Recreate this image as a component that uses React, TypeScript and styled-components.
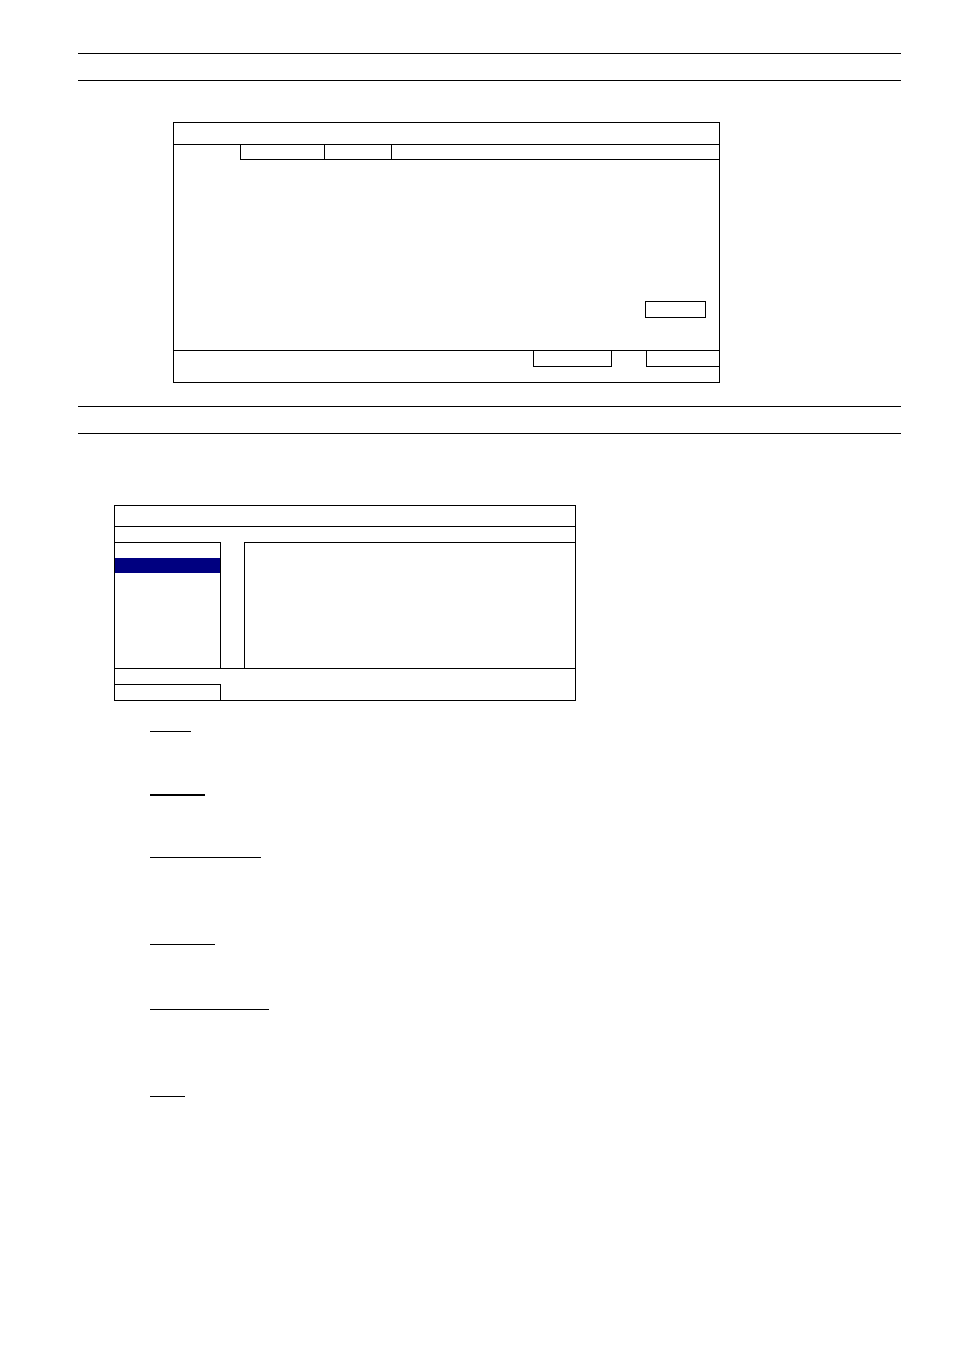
import React from "react";
import styled, { createGlobalStyle } from "styled-components";

const Global = createGlobalStyle`
  *, *::before, *::after { box-sizing: border-box; }
  html, body { margin: 0; padding: 0; background: #fff; }
  body { font-family: "Liberation Sans", Arial, sans-serif; }
`;

const Page = styled.div`
  width: 954px;
  min-height: 1350px;
  background: #fff;
  padding-top: 53px;
  display: flex;
  flex-direction: column;
`;

const DoubleRule = styled.div<{ $top?: number }>`
  margin-top: ${(p) => p.$top ?? 0}px;
  margin-left: 78px;
  width: 823px;
  height: 28px;
  border-top: 1px solid #000;
  border-bottom: 1px solid #000;
`;

/* ---------- Dialog 1 ---------- */
const Dialog = styled.div<{ $left: number; $top: number; $w: number; $h: number }>`
  margin-left: ${(p) => p.$left}px;
  margin-top: ${(p) => p.$top}px;
  width: ${(p) => p.$w}px;
  height: ${(p) => p.$h}px;
  border: 1px solid #000;
  display: flex;
  flex-direction: column;
`;

const TitleBar = styled.div<{ $h: number }>`
  height: ${(p) => p.$h}px;
  border-bottom: 1px solid #000;
  flex: none;
`;

const TabRow = styled.div`
  height: 15px;
  display: flex;
  flex: none;
`;

const TabSpacer = styled.div`
  width: 66px;
  flex: none;
`;

const Tab = styled.div<{ $w?: number }>`
  ${(p) => (p.$w ? `width: ${p.$w}px; flex: none;` : "flex: 1;")}
  border-left: 1px solid #000;
  border-bottom: 1px solid #000;
`;

const Content = styled.div`
  height: 190px;
  flex: none;
  display: flex;
  justify-content: flex-end;
  align-items: flex-start;
  padding-top: 141px;
  padding-right: 13px;
`;

const SmallButton = styled.div`
  width: 61px;
  height: 17px;
  border: 1px solid #000;
`;

const ButtonRow = styled.div`
  height: 17px;
  flex: none;
  border-top: 1px solid #000;
  display: flex;
  justify-content: flex-end;
`;

const RowButton = styled.div<{ $w: number; $right?: boolean; $gap?: number }>`
  width: ${(p) => p.$w}px;
  height: 16px;
  border-left: 1px solid #000;
  border-bottom: 1px solid #000;
  ${(p) => (p.$right ? "border-right: 1px solid #000;" : "")}
  margin-right: ${(p) => p.$gap ?? 0}px;
`;

/* ---------- Dialog 2 ---------- */
const Gap = styled.div<{ $h: number }>`
  height: ${(p) => p.$h}px;
  flex: none;
`;

const MiddleRow = styled.div`
  height: 127px;
  flex: none;
  display: flex;
  border-bottom: 1px solid #000;
`;

const ListBox = styled.div`
  width: 106px;
  flex: none;
  border-top: 1px solid #000;
  border-right: 1px solid #000;
  display: flex;
  flex-direction: column;
`;

const ListItem = styled.div<{ $active?: boolean }>`
  height: 15px;
  flex: none;
  background: ${(p) => (p.$active ? "#000080" : "transparent")};
`;

const Panel = styled.div`
  flex: 1;
  margin-left: 23px;
  border-top: 1px solid #000;
  border-left: 1px solid #000;
`;

const BottomArea = styled.div`
  flex: 1;
  display: flex;
  flex-direction: column;
  justify-content: flex-end;
`;

const BottomBox = styled.div`
  width: 106px;
  height: 16px;
  border-top: 1px solid #000;
  border-right: 1px solid #000;
`;

/* ---------- Underlines ---------- */
const Marks = styled.div`
  display: flex;
  flex-direction: column;
  padding-left: 150px;
`;

const Mark = styled.div<{ $w: number; $top: number; $thick?: number }>`
  width: ${(p) => p.$w}px;
  margin-top: ${(p) => p.$top}px;
  height: 0;
  border-top: ${(p) => p.$thick ?? 1}px solid #000;
`;

const marks = [
  { w: 41, y: 731 },
  { w: 55, y: 794, t: 2 },
  { w: 111, y: 857 },
  { w: 65, y: 944 },
  { w: 119, y: 1009 },
  { w: 35, y: 1096 },
];

export default function App() {
  let prevEnd = 701;
  return (
    <>
      <Global />
      <Page>
        <DoubleRule />
        <Dialog $left={173} $top={41} $w={547} $h={261}>
          <TitleBar $h={22} />
          <TabRow>
            <TabSpacer />
            <Tab $w={84} />
            <Tab $w={67} />
            <Tab />
          </TabRow>
          <Content>
            <SmallButton />
          </Content>
          <ButtonRow>
            <RowButton $w={79} $right $gap={34} />
            <RowButton $w={73} />
          </ButtonRow>
        </Dialog>
        <DoubleRule $top={23} />
        <Dialog $left={114} $top={71} $w={462} $h={196}>
          <TitleBar $h={21} />
          <Gap $h={15} />
          <MiddleRow>
            <ListBox>
              <ListItem />
              <ListItem $active />
            </ListBox>
            <Panel />
          </MiddleRow>
          <BottomArea>
            <BottomBox />
          </BottomArea>
        </Dialog>
        <Marks>
          {marks.map((m, i) => {
            const top = m.y - prevEnd;
            prevEnd = m.y + (m.t ?? 1);
            return <Mark key={i} $w={m.w} $top={top} $thick={m.t} />;
          })}
        </Marks>
      </Page>
    </>
  );
}
